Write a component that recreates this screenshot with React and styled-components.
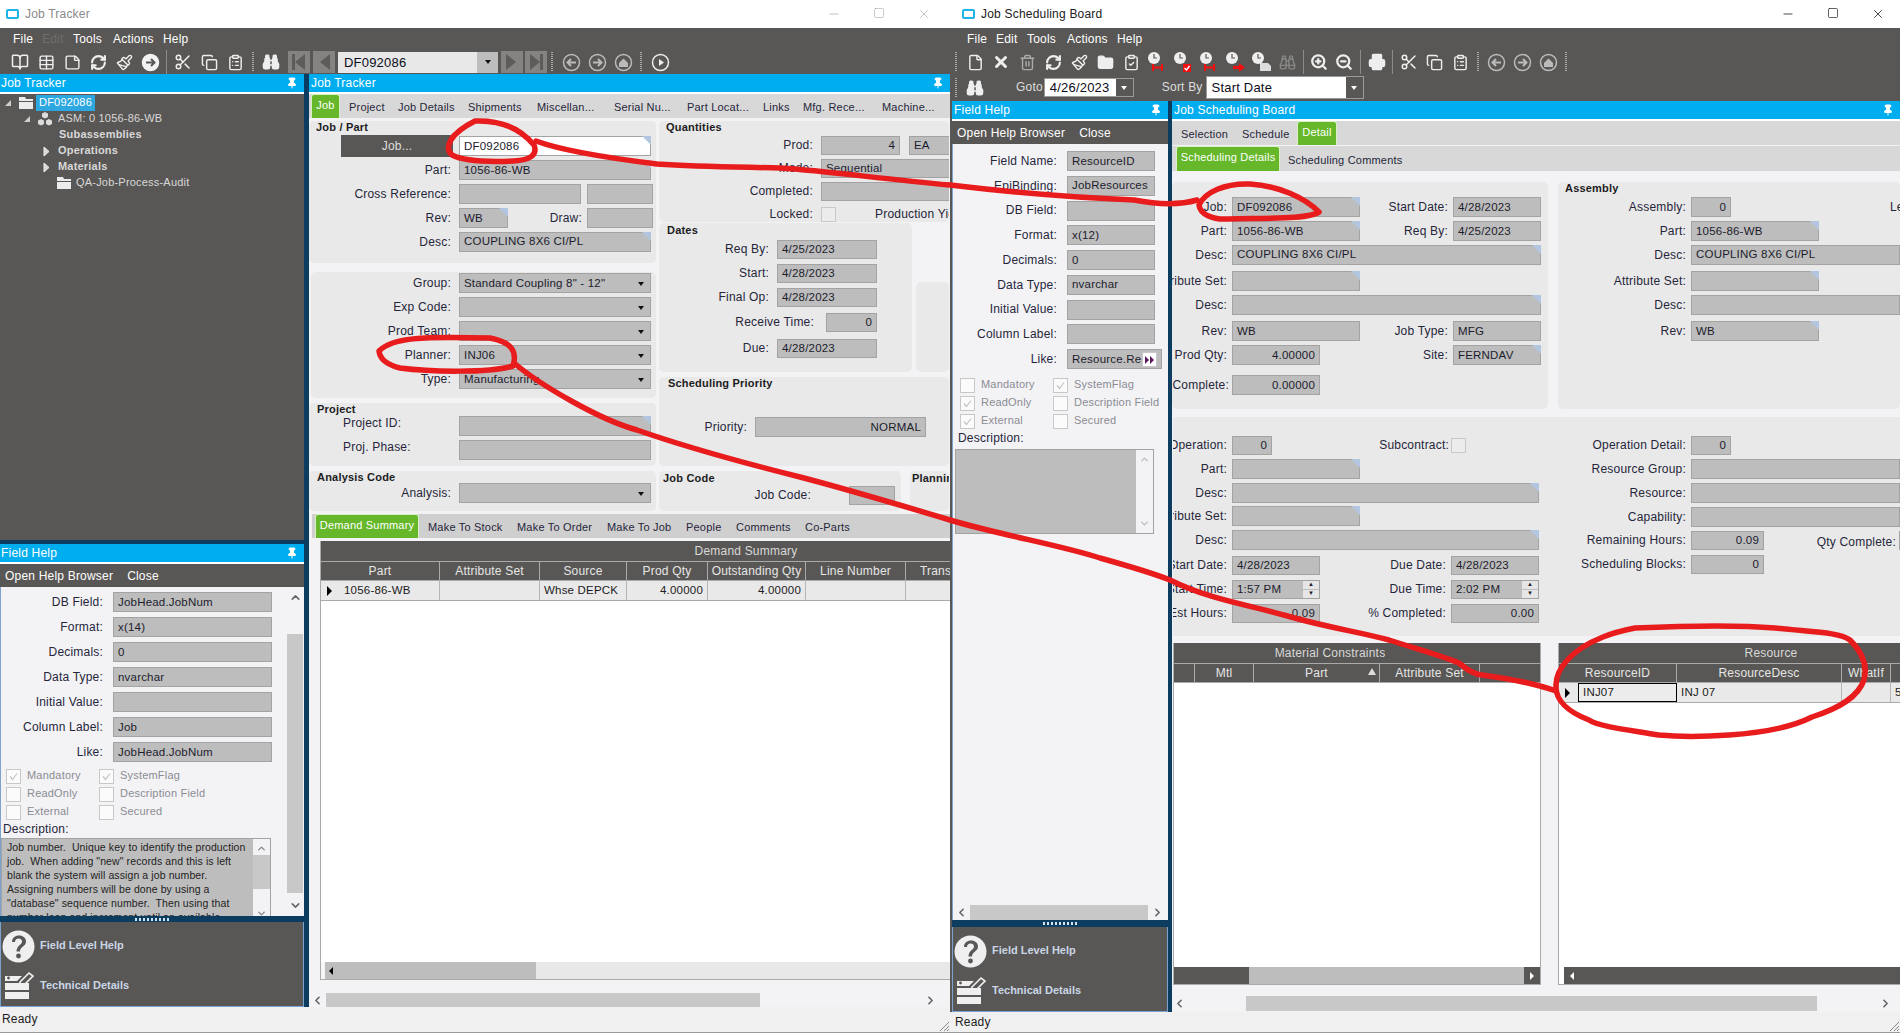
import React from 'react';
import styled, { createGlobalStyle } from 'styled-components';
import {
  BookOpen, Table, StickyNote, RefreshCw, Paintbrush, Scissors, Copy, ClipboardList, Binoculars,
  Minus, Square, X, Pin, ChevronUp, ChevronDown, ChevronLeft, ChevronRight, ZoomIn, ZoomOut, Printer,
  FolderClosed, ClipboardCheck, Trash2, File,
} from 'lucide-react';

const dark = '#595755';
const blue = '#00adef';
const navy = '#0d3c61';
const green = '#66b82a';

const GlobalStyle = createGlobalStyle`
  html, body { margin: 0; padding: 0; background: #fff; overflow: hidden; }
  body { font: 12px/1.2 "Liberation Sans", Arial, sans-serif; letter-spacing: 0.2px; color: #1c1c22; }
`;

const Screen = styled.div`
  position: relative;
  display: flex;
  width: 1900px;
  height: 1033px;
  overflow: hidden;
`;
const Window = styled.div`
  display: flex;
  flex-direction: column;
  width: 950px;
  height: 1033px;
  overflow: hidden;
  background: ${dark};
`;
const TitleBar = styled.div`
  display: flex;
  align-items: center;
  flex: 0 0 28px;
  padding-left: ${(p) => p.$left}px;
  background: #fff;
  color: ${(p) => (p.$active ? '#222' : '#8a8a8a')};
`;
const AppIcon = styled.span`
  width: 9px;
  height: 6px;
  margin-right: 6px;
  border: 2px solid #1fb3e8;
  border-radius: 2px;
`;
const WinButtons = styled.div`
  display: flex;
  margin-left: auto;
  padding-right: ${(p) => p.$pr}px;
  gap: 32px;
  color: ${(p) => (p.$active ? '#111' : '#999')};
`;
const MenuBar = styled.div`
  display: flex;
  align-items: center;
  flex: 0 0 22px;
  padding-left: ${(p) => p.$left}px;
  color: #fff;
`;
const MenuItem = styled.span`
  width: ${(p) => p.$w}px;
  color: ${(p) => (p.$off ? '#6f6d6b' : '#fff')};
`;
const ToolBar = styled.div`
  display: flex;
  align-items: center;
  flex: 0 0 ${(p) => p.$h || 24}px;
  padding-left: ${(p) => p.$left}px;
  color: #eee;
`;
const ToolBtn = styled.span`
  display: flex;
  align-items: center;
  justify-content: center;
  flex: 0 0 ${(p) => p.$w || 26}px;
  height: 24px;
  margin-left: ${(p) => p.$ml || 0}px;
`;
const Sep = styled.span`
  flex: 0 0 1px;
  height: 24px;
  margin: 0 3px;
  background: #8d8b89;
`;
const Grip = styled.span`
  flex: 0 0 2px;
  height: 20px;
  margin: 0 ${(p) => p.$mr ?? 4}px 0 ${(p) => p.$ml ?? 4}px;
  background: repeating-linear-gradient(#aaa 0 1px, transparent 1px 2px);
`;
const NavBtn = styled.span`
  display: flex;
  align-items: center;
  justify-content: center;
  flex: 0 0 22px;
  height: 22px;
  margin-left: ${(p) => p.$ml || 3}px;
  background: #858381;
  color: #5e5c5a;
`;
const NavCombo = styled.span`
  display: flex;
  flex: 0 0 160px;
  height: 21px;
  margin-left: 3px;
  background: #e8e8e8;
  color: #0c0c20;
  font-size: 13px;
`;
const NavComboText = styled.span`
  flex: 1;
  padding: 3px 6px;
`;
const NavComboArrow = styled.span`
  display: flex;
  align-items: center;
  justify-content: center;
  flex: 0 0 21px;
  background: #bdbdbd;
`;
const DownTri = styled.span`
  width: 0;
  height: 0;
  margin-left: auto;
  margin-right: ${(p) => p.$mr || 0}px;
  border: 3px solid transparent;
  border-top: 4px solid ${(p) => p.$c || '#111'};
  border-bottom: 0;
`;
const BarLabel = styled.span`
  margin-left: ${(p) => p.$ml}px;
  color: #ddd;
`;
const GotoBox = styled.span`
  display: flex;
  align-items: center;
  flex: 0 0 ${(p) => p.$w}px;
  height: ${(p) => p.$h}px;
  margin-left: ${(p) => p.$ml}px;
  padding-left: 5px;
  box-sizing: border-box;
  background: #fff;
  border: 1px solid #9a9a9a;
  color: #0c0c20;
  font-size: 13px;
`;
const GotoArrow = styled.span`
  display: flex;
  align-items: center;
  justify-content: center;
  align-self: stretch;
  flex: 0 0 17px;
  margin-left: auto;
  background: ${dark};
`;
const WhiteTri = styled(DownTri)`
  margin: 0;
`;
const Body = styled.div`
  display: flex;
  flex: 1;
  min-height: 0;
  ${(p) => p.$inset && 'padding-left: 2px;'}
`;
const StatusBar = styled.div`
  position: relative;
  display: flex;
  align-items: center;
  flex: 0 0 ${(p) => p.$h}px;
  box-sizing: border-box;
  padding-left: ${(p) => p.$left}px;
  background: #f0f0f0;
  border-bottom: 1px solid #999;
`;
const SizeGrip = styled.svg`
  position: absolute;
  right: 1px;
  bottom: 1px;
`;
const Dock = styled.div`
  display: flex;
  flex-direction: column;
  flex: 0 0 ${(p) => p.$w}px;
  min-width: 0;
`;
const Sash = styled.div`
  flex: 0 0 ${(p) => p.$w}px;
  background: ${navy};
`;
const DockHeader = styled.div`
  display: flex;
  align-items: center;
  justify-content: space-between;
  flex: 0 0 20px;
  box-sizing: border-box;
  padding: 0 6px 0 ${(p) => p.$left ?? 1}px;
  background: ${blue};
  color: #fff;
  border-bottom: 2px solid #fff;
`;
const Tree = styled.div`
  flex: 0 0 ${(p) => p.$h}px;
  box-sizing: border-box;
  padding-top: 1px;
  background: ${dark};
  color: #d8d8d8;
  font-size: 11px;
`;
const TreeRow = styled.div`
  display: flex;
  align-items: center;
  height: 16px;
  padding-left: ${(p) => p.$left}px;
  font-weight: ${(p) => (p.$bold ? 700 : 400)};
`;
const TreeCaret = styled.svg`
  flex: 0 0 9px;
  margin-right: ${(p) => p.$mr}px;
`;
const TreeSel = styled.span`
  margin-left: 2px;
  padding: 1px 3px;
  background: #2ca7e0;
  color: #fff;
`;
const TreeText = styled.span`
  margin-left: ${(p) => p.$ml || 4}px;
`;
const HSash = styled.div`
  display: flex;
  align-items: center;
  justify-content: center;
  flex: 0 0 ${(p) => p.$h}px;
  background: ${navy};
`;
const HSashDots = styled.span`
  width: 34px;
  height: 3px;
  background: repeating-linear-gradient(90deg, #cfe3f2 0 2px, transparent 2px 4px);
`;
const HelpBar = styled.div`
  display: flex;
  align-items: center;
  gap: 14px;
  flex: 0 0 23px;
  box-sizing: border-box;
  padding: 2px 0 0 5px;
  background: ${dark};
  color: #fff;
`;
const HelpPane = styled.div`
  display: flex;
  flex: 1;
  flex-direction: ${(p) => (p.$col ? 'column' : 'row')};
  min-height: 0;
  overflow: hidden;
  background: #f3f3f6;
  border-left: 1px solid #7aa3cf;
`;
const HelpBody = styled.div`
  flex: 1;
  min-width: 0;
  min-height: 0;
  padding-top: ${(p) => p.$top}px;
  overflow: hidden;
`;
const HelpRows = styled.div`
  display: flex;
  flex-direction: column;
  gap: ${(p) => p.$gap}px;
`;
const Row = styled.div`
  display: flex;
  align-items: ${(p) => p.$align || 'center'};
  flex: 0 0 ${(p) => p.$h || 20}px;
  height: ${(p) => p.$h || 20}px;
  margin-top: ${(p) => p.$mt || 0}px;
`;
const Label = styled.span`
  display: flex;
  justify-content: ${(p) => (p.$start ? 'flex-start' : 'flex-end')};
  flex: 0 0 ${(p) => p.$w}px;
  box-sizing: border-box;
  padding: 0 ${(p) => p.$pad ?? 8}px 0 ${(p) => p.$start || 0}px;
  margin-top: ${(p) => p.$mt || 0}px;
  overflow: hidden;
  white-space: nowrap;
  color: #26263a;
`;
const Box = styled.span`
  position: relative;
  display: flex;
  align-items: ${(p) => (p.$top ? 'flex-start' : 'center')};
  justify-content: ${(p) => (p.$right ? 'flex-end' : 'flex-start')};
  flex: 0 0 ${(p) => p.$w}px;
  box-sizing: border-box;
  height: ${(p) => p.$h || 20}px;
  padding: ${(p) => (p.$top ? '2px' : '1px')} 4px 0;
  background: ${(p) => (p.$white ? '#fff' : '#bdbdbd')};
  border: 1px solid #a3a3a3;
  color: #1c1c2c;
  font-size: 11.5px;
  white-space: nowrap;
  &::after {
    content: '';
    display: ${(p) => (p.$corner ? 'block' : 'none')};
    position: absolute;
    top: -1px;
    right: -1px;
    border-top: 9px solid #b3c6e0;
    border-left: 9px solid transparent;
  }
`;
const Spinner = styled.span`
  display: flex;
  flex-direction: column;
  gap: 1px;
  flex: 0 0 16px;
  height: 17px;
  margin: -1px -4px 0 auto;
`;
const SpinBtn = styled.span`
  display: flex;
  align-items: center;
  justify-content: center;
  flex: 1;
  background: #e6e6e6;
  font-size: 6px;
`;
const Check = styled.span`
  display: flex;
  align-items: center;
  justify-content: center;
  flex: 0 0 13px;
  height: 13px;
  margin-left: ${(p) => p.$ml || 0}px;
  background: ${(p) => p.$bg || '#fbfbfb'};
  border: 1px solid #c8c8c8;
`;
const CheckRows = styled.div`
  display: grid;
  grid-template-columns: ${(p) => p.$col}px 1fr;
  grid-auto-rows: 18px;
  margin: ${(p) => p.$mt}px 0 0 ${(p) => p.$left}px;
`;
const CheckItem = styled.span`
  display: flex;
  align-items: center;
  gap: 6px;
  color: #8b8b93;
  font-size: 11px;
  white-space: nowrap;
`;
const DescLabel = styled.div`
  margin: ${(p) => p.$mt}px 0 ${(p) => p.$mb ?? 2}px ${(p) => p.$left}px;
  color: #26263a;
`;
const DescBox = styled.div`
  display: flex;
  width: ${(p) => p.$w}px;
  height: ${(p) => p.$h}px;
  margin-left: ${(p) => p.$left}px;
  background: #bdbdbd;
  border: 1px solid #a3a3a3;
  overflow: hidden;
`;
const DescText = styled.div`
  flex: 1;
  padding: 1px 5px;
  font-size: 10.5px;
  letter-spacing: 0.1px;
  line-height: 14px;
  white-space: pre;
  overflow: hidden;
  color: #222;
`;
const DescScroll = styled.div`
  display: flex;
  flex-direction: column;
  align-items: center;
  justify-content: space-between;
  flex: 0 0 17px;
  padding: 4px 0;
  background: #f3f3f6;
  color: ${(p) => p.$c || '#888'};
`;
const DescThumb = styled.div`
  align-self: stretch;
  height: 34px;
  margin: 1px 0 auto;
  background: #c8c8c8;
`;
const VScroll = styled.div`
  display: flex;
  flex-direction: column;
  align-items: center;
  flex: 0 0 16px;
  margin-right: 1px;
  padding: 4px 0;
  color: #666;
`;
const VThumb = styled.div`
  align-self: stretch;
  flex: 1;
  margin: 30px 0 6px;
  background: #c8c8c8;
`;
const HScroll = styled.div`
  display: flex;
  align-items: center;
  flex: 0 0 15px;
  margin-top: ${(p) => p.$mt || 0}px;
  color: #666;
`;
const HThumb = styled.div`
  flex: 0 0 ${(p) => p.$w}px;
  align-self: stretch;
  margin-left: ${(p) => p.$ml}px;
  background: #c8c8c8;
`;
const ArrowSlot = styled.span`
  display: flex;
  justify-content: center;
  flex: 0 0 ${(p) => p.$w}px;
  margin-left: ${(p) => p.$ml || 0}px;
`;
const HelpFooter = styled.div`
  flex: 0 0 ${(p) => p.$h}px;
  box-sizing: border-box;
  padding-top: 4px;
  background: ${dark};
  border: 1px solid #7aa3cf;
  border-top: 0;
  color: #c9d6e6;
  font-weight: 700;
  font-size: 11px;
  letter-spacing: 0;
`;
const FooterRow = styled.div`
  display: flex;
  align-items: center;
  gap: 5px;
  height: 40px;
  padding-left: 1px;
`;
const FooterIcon = styled.svg`
  flex: 0 0 33px;
`;
const Main = styled.div`
  display: flex;
  flex-direction: column;
  flex: 1;
  min-width: 0;
  background: #f3f3f6;
  overflow: hidden;
`;
const TabStrip = styled.div`
  display: flex;
  align-items: flex-end;
  flex: 0 0 ${(p) => p.$h || 24}px;
  margin: ${(p) => p.$mt || 0}px 0 0 ${(p) => p.$ml || 0}px;
  padding-left: ${(p) => p.$pad || 0}px;
  background: ${(p) => p.$bg || '#d8d8d8'};
  font-size: 11px;
  overflow: hidden;
`;
const Tab = styled.span`
  display: flex;
  align-items: center;
  flex: 0 0 ${(p) => p.$w}px;
  height: 100%;
  box-sizing: border-box;
  white-space: nowrap;
  margin-left: ${(p) => p.$ml || 0}px;
  ${(p) =>
    p.$on
      ? `
    justify-content: center;
    padding-bottom: 2px;
    background: ${green};
    color: #fff;
    border: 1px solid #d9f0c4;
    border-bottom: 0;
    border-radius: 3px 3px 0 0;
  `
      : `
    padding-top: 4px;
    color: #26263a;
  `}
`;
const FormGrid = styled.div`
  display: flex;
  flex: 0 0 ${(p) => p.$h}px;
  box-sizing: border-box;
  gap: 3px;
  padding-top: 3px;
  overflow: hidden;
`;
const FormCol = styled.div`
  display: flex;
  flex-direction: column;
  flex: 0 0 ${(p) => p.$w}px;
  min-width: 0;
`;
const Group = styled.section`
  ${(p) => p.$flex && 'display: flex;'}
  flex: ${(p) => (p.$grow ? 1 : `0 0 ${p.$basis ?? p.$h}px`)};
  box-sizing: border-box;
  height: ${(p) => p.$h}px;
  margin: ${(p) => p.$mt || 0}px 0 0 ${(p) => p.$ml || 0}px;
  padding-top: ${(p) => p.$top || 0}px;
  background: #e9e9e9;
  border-radius: ${(p) => (p.$square ? 0 : 5)}px;
  overflow: hidden;
  min-width: 0;
`;
const GroupRow = styled.div`
  display: flex;
  flex: 0 0 ${(p) => p.$h}px;
  gap: ${(p) => p.$gap}px;
  margin-top: ${(p) => p.$mt || 0}px;
  min-width: 0;
`;
const Heading = styled.div`
  height: ${(p) => p.$h}px;
  padding: ${(p) => p.$top ?? 1}px 0 0 ${(p) => p.$left}px;
  box-sizing: border-box;
  font-size: 11px;
  font-weight: 700;
  white-space: nowrap;
  color: #1c1c22;
`;
const Stack = styled.div`
  display: flex;
  flex-direction: column;
  gap: 4px;
  padding-top: ${(p) => p.$top || 0}px;
`;
const JobButton = styled.span`
  display: flex;
  align-items: center;
  justify-content: center;
  flex: 0 0 112px;
  height: 22px;
  margin: 0 6px 0 32px;
  background: ${dark};
  color: #ddd;
`;
const DataGrid = styled.div`
  display: flex;
  flex-direction: column;
  flex: ${(p) => (p.$w ? `0 0 ${p.$w}px` : 1)};
  box-sizing: border-box;
  min-width: 0;
  margin-left: ${(p) => p.$ml || 0}px;
  background: #fff;
  border: solid #aaa;
  border-width: 0 ${(p) => (p.$noRight ? 0 : 1)}px 1px 1px;
  overflow: hidden;
`;
const GridTitle = styled.div`
  flex: 0 0 20px;
  display: flex;
  background: ${dark};
  color: #d8d8d8;
`;
const GridTitleText = styled.span`
  display: flex;
  align-items: center;
  justify-content: center;
  flex: 0 0 ${(p) => p.$w}px;
`;
const GridHead = styled.div`
  display: flex;
  flex: 0 0 20px;
  background: ${dark};
  border-top: 1px solid #aaa;
  border-bottom: 1px solid #aaa;
  box-sizing: border-box;
  color: #e6e6e6;
`;
const HeadCell = styled.span`
  position: relative;
  display: flex;
  align-items: center;
  justify-content: center;
  flex: 0 0 ${(p) => p.$w}px;
  box-sizing: border-box;
  border-right: 1px solid #aaa;
  white-space: nowrap;
`;
const SortMark = styled.span`
  position: absolute;
  right: 3px;
  top: 4px;
  width: 0;
  height: 0;
  border: 4px solid transparent;
  border-bottom: 7px solid #ddd;
  border-top: 0;
`;
const GridRow = styled.div`
  display: flex;
  flex: 0 0 20px;
  box-sizing: border-box;
  background: #e9e9e9;
  border-bottom: 1px solid #aaa;
`;
const Cell = styled.span`
  display: flex;
  align-items: center;
  justify-content: ${(p) => (p.$right ? 'flex-end' : 'flex-start')};
  flex: 0 0 ${(p) => p.$w}px;
  box-sizing: border-box;
  padding: 0 4px;
  font-size: 11.5px;
  white-space: nowrap;
  border-right: 1px solid #b5b5b5;
  ${(p) => p.$sel && 'border: 1px solid #000; background: #ececec;'}
  ${(p) => p.$mark && 'border-right: 0;'}
`;
const RowMark = styled.span`
  width: 0;
  height: 0;
  border: 5px solid transparent;
  border-left: 5px solid #000;
  border-right: 0;
  margin-left: 2px;
`;
const GridFill = styled.div`
  flex: 1;
  background: #fff;
`;
const GridScroll = styled.div`
  display: flex;
  flex: 0 0 17px;
  background: ${(p) => p.$bg};
`;
const GridScrollPart = styled.span`
  display: flex;
  align-items: center;
  justify-content: ${(p) => p.$justify || 'center'};
  flex: ${(p) => (p.$w ? `0 0 ${p.$w}px` : 1)};
  padding-left: ${(p) => p.$pl || 0}px;
  background: ${(p) => p.$bg};
`;
const ScrollTri = styled.span`
  width: 0;
  height: 0;
  border: 4px solid transparent;
  ${(p) => (p.$left ? `border-right: 4px solid ${p.$c}; border-left: 0;` : `border-left: 4px solid ${p.$c}; border-right: 0;`)}
`;
const Section = styled.div`
  display: flex;
  flex: 0 0 ${(p) => p.$h}px;
  gap: ${(p) => p.$gap || 0}px;
  margin-top: ${(p) => p.$mt || 0}px;
  padding: 0 ${(p) => p.$pr || 0}px 0 ${(p) => p.$pl || 0}px;
  min-height: 0;
  overflow: hidden;
`;
const Overlay = styled.svg`
  position: absolute;
  inset: 0;
  pointer-events: none;
`;

const Ticks = () => (
  <svg width="9" height="9" viewBox="0 0 9 9" fill="none" stroke="#c4c4c4" strokeWidth="1.2">
    <path d="M1 4.5l2.5 3L8 1.5" />
  </svg>
);

const Folder = () => (
  <svg width="16" height="14" viewBox="0 0 16 14">
    <path d="M1 1h6l1 2h7v2H1z M1 6h14v7H1z" fill="#ececec" />
  </svg>
);

const Cubes = () => (
  <svg width="16" height="15" viewBox="0 0 16 15" fill="#dcdcdc">
    <path d="M8 0l3 1.5V5L8 6.5 5 5V1.5zM4 7l3 1.5V12l-3 1.5L1 12V8.5zM12 7l3 1.5V12l-3 1.5L9 12V8.5z" />
  </svg>
);

const ExpandedCaret = ({ mr }) => (
  <TreeCaret $mr={mr} width="9" height="9" viewBox="0 0 9 9">
    <path d="M7 1v6H1z" fill="#cfcfcf" />
  </TreeCaret>
);
const ClosedCaret = ({ mr }) => (
  <TreeCaret $mr={mr} width="9" height="11" viewBox="0 0 9 11">
    <path d="M2 1l5 4.5L2 10z" fill="#d8d8d8" stroke="#eee" />
  </TreeCaret>
);

const CircleGo = ({ dir = 'right', solid, color = '#ddd' }) => (
  <svg width="19" height="19" viewBox="0 0 19 19" fill="none" stroke={color} strokeWidth="1.5">
    <circle cx="9.5" cy="9.5" r="8" fill={solid ? color : 'none'} />
    {dir === 'left' && <path d="M14 9.5H6M9 6L5.5 9.5 9 13" strokeWidth="2" />}
    {dir === 'right' && <path d="M5 9.5h8M10 6l3.5 3.5L10 13" strokeWidth="2" stroke={solid ? dark : color} />}
    {dir === 'home' && <path d="M5 10l4.5-4.5L14 10v4H5z" fill={color} stroke="none" />}
    {dir === 'play' && <path d="M8 6l5 3.5L8 13z" fill={color} stroke="none" />}
  </svg>
);

const ClockFlag = ({ kind }) => (
  <svg width="24" height="24" viewBox="0 0 24 24">
    <circle cx="9" cy="8" r="6" fill="#eee" />
    <path d="M9 4v4h3" fill="none" stroke={dark} strokeWidth="1.2" />
    {kind === 'bar' && <path d="M7 14v7h2v-2.5h7V21h2v-7h-2v2.5H9V14z" fill="#f01010" />}
    {kind === 'check' && (
      <g>
        <rect x="12" y="14" width="8" height="8" fill="#f01010" />
        <path d="M13.5 18l2 2 3-4" stroke="#fff" strokeWidth="1.4" fill="none" />
      </g>
    )}
    {kind === 'arrow' && <path d="M10 16h6v-3l6 4.500-6 4.500v-3h-6z" fill="#f01010" />}
    {kind === 'doc' && <path d="M11 13h8l3 3v5H11z" fill="#ddd" />}
  </svg>
);

const NavTri = ({ back, stop }) => (
  <svg width="14" height="18" viewBox="0 0 14 18" fill="currentColor">
    {back ? <path d="M13 1v16L3 9z" /> : <path d="M1 1v16l10-8z" />}
    {stop && (back ? <rect x="0" y="1" width="3" height="16" /> : <rect x="11" y="1" width="3" height="16" />)}
  </svg>
);

const Question = () => (
  <FooterIcon width="33" height="33" viewBox="0 0 33 33">
    <circle cx="16.500" cy="16.500" r="16" fill="#efefef" />
    <path d="M10 12c0-4 3-6.500 7-6.500s7 2.500 7 6c0 5-6 5-6 10h-3.500c0-6 5.500-6.500 5.500-10 0-1.800-1.500-3-3.500-3s-3.500 1.500-3.500 3.500z" fill={dark} />
    <circle cx="16.500" cy="26" r="2.400" fill={dark} />
  </FooterIcon>
);

const TechIcon = () => (
  <FooterIcon width="33" height="30" viewBox="0 0 33 30" fill="#efefef">
    <path d="M3 5h17l-5 5H3zM3 12h24v7H3zM3 21h24v7H3z" />
    <circle cx="6.500" cy="7" r="1.400" fill={dark} />
    <path d="M18 11l9-9 4 3-9 9-5 1z" fill="none" stroke="#efefef" strokeWidth="1.600" />
  </FooterIcon>
);

const Field = ({ l, lw, pad, lmt, start, w, v, right, corner, combo, white, top, spin, h }) => (
  <>
    {l !== undefined && (
      <Label $w={lw} $pad={pad} $mt={lmt} $start={start}>
        {l}
      </Label>
    )}
    {w !== undefined && (
      <Box $w={w} $right={right} $corner={corner} $white={white} $top={top} $h={h}>
        {v}
        {combo && <DownTri $mr={2} />}
        {spin && (
          <Spinner>
            <SpinBtn>▲</SpinBtn>
            <SpinBtn>▼</SpinBtn>
          </Spinner>
        )}
      </Box>
    )}
  </>
);

const Cb = ({ on, bg, ml }) => (
  <Check $bg={bg} $ml={ml}>
    {on && <Ticks />}
  </Check>
);

const CheckGrid = ({ col, left, mt, items }) => (
  <CheckRows $col={col} $left={left} $mt={mt}>
    {items.map(([text, on]) => (
      <CheckItem key={text}>
        <Cb on={on} />
        {text}
      </CheckItem>
    ))}
  </CheckRows>
);

const HelpRowList = ({ rows, lw, w, gap }) => (
  <HelpRows $gap={gap}>
    {rows.map(([l, v]) => (
      <Row key={l}>
        <Field l={l} lw={lw} pad={10} w={w} v={v} />
      </Row>
    ))}
  </HelpRows>
);

const Footer = ({ h }) => (
  <HelpFooter $h={h}>
    <FooterRow>
      <Question />
      Field Level Help
    </FooterRow>
    <FooterRow>
      <TechIcon />
      Technical Details
    </FooterRow>
  </HelpFooter>
);

// merge: the row marker column has no heading of its own, the first heading spans it
const GridTable = ({ title, titleW, cols, row, ml, w, noRight, merge, scroll }) => {
  const heads = merge ? [{ ...cols[1], w: cols[0].w + cols[1].w }, ...cols.slice(2)] : cols;
  return (
    <DataGrid $ml={ml} $w={w} $noRight={noRight}>
      <GridTitle>
        <GridTitleText $w={titleW}>{title}</GridTitleText>
      </GridTitle>
      <GridHead>
        {heads.map((c, i) => (
          <HeadCell key={i} $w={c.w}>
            {c.t}
            {c.sort && <SortMark />}
          </HeadCell>
        ))}
      </GridHead>
      {row && (
        <GridRow>
          {cols.map((c, i) =>
            i === 0 ? (
              <Cell key={i} $w={c.w} $mark>
                <RowMark />
              </Cell>
            ) : (
              <Cell key={i} $w={c.w} $right={c.right} $sel={c.sel}>
                {row[i]}
              </Cell>
            )
          )}
        </GridRow>
      )}
      <GridFill />
      {scroll}
    </DataGrid>
  );
};

const jobHelp = [
  ['DB Field:', 'JobHead.JobNum'],
  ['Format:', 'x(14)'],
  ['Decimals:', '0'],
  ['Data Type:', 'nvarchar'],
  ['Initial Value:', ''],
  ['Column Label:', 'Job'],
  ['Like:', 'JobHead.JobNum'],
];
const resourceHelp = [
  ['Field Name:', 'ResourceID'],
  ['EpiBinding:', 'JobResources'],
  ['DB Field:', ''],
  ['Format:', 'x(12)'],
  ['Decimals:', '0'],
  ['Data Type:', 'nvarchar'],
  ['Initial Value:', ''],
  ['Column Label:', ''],
];
const jobChecks = [
  ['Mandatory', true], ['SystemFlag', true],
  ['ReadOnly', false], ['Description Field', false],
  ['External', false], ['Secured', false],
];
const resourceChecks = [
  ['Mandatory', false], ['SystemFlag', true],
  ['ReadOnly', true], ['Description Field', false],
  ['External', true], ['Secured', false],
];
const jobHelpText = `Job number.  Unique key to identify the production
job.  When adding "new" records and this is left
blank the system will assign a job number.
Assigning numbers will be done by using a
"database" sequence number.  Then using that
number loop and increment until an available`;

const jobTabs = [
  ['Project', 49], ['Job Details', 70], ['Shipments', 69], ['Miscellan...', 77], ['Serial Nu...', 73],
  ['Part Locat...', 76], ['Links', 40], ['Mfg. Rece...', 79], ['Machine...', 80],
];
const demandTabs = [
  ['Make To Stock', 89], ['Make To Order', 90], ['Make To Job', 79], ['People', 50], ['Comments', 69], ['Co-Parts', 60],
];
const demandCols = [
  { t: '', w: 19 }, { t: 'Part', w: 100 }, { t: 'Attribute Set', w: 100 }, { t: 'Source', w: 87 },
  { t: 'Prod Qty', w: 81, right: true }, { t: 'Outstanding Qty', w: 98, right: true },
  { t: 'Line Number', w: 100 }, { t: 'Trans', w: 60 },
];
const materialCols = [
  { t: '', w: 21 }, { t: 'Mtl', w: 59 }, { t: 'Part', w: 126, sort: true }, { t: 'Attribute Set', w: 100 }, { t: '', w: 61 },
];
const resourceCols = [
  { t: '', w: 19 }, { t: 'ResourceID', w: 99, sel: true }, { t: 'ResourceDesc', w: 165 }, { t: 'WhatIf', w: 49 }, { t: '', w: 30 },
];

function JobTrackerForm() {
  return (
    <FormGrid $h={396}>
      <FormCol $w={347}>
        <Group $h={142}>
          <Heading $h={15} $left={7} $top={0}>Job / Part</Heading>
          <Stack>
            <Row>
              <JobButton>Job...</JobButton>
              <Field w={192} v="DF092086" white corner />
            </Row>
            <Row><Field l="Part:" lw={150} w={192} v="1056-86-WB" corner /></Row>
            <Row>
              <Field l="Cross Reference:" lw={150} w={122} />
              <Field l="" lw={6} pad={0} w={66} />
            </Row>
            <Row>
              <Field l="Rev:" lw={150} w={49} v="WB" corner />
              <Field l="Draw:" lw={79} pad={5} w={66} />
            </Row>
            <Row><Field l="Desc:" lw={150} w={192} v="COUPLING 8X6 CI/PL" corner top /></Row>
          </Stack>
        </Group>
        <Group $h={126} $mt={9} $ml={2} $top={1}>
          <Stack>
            <Row><Field l="Group:" lw={148} w={192} v={'Standard Coupling 8" - 12"'} combo /></Row>
            <Row><Field l="Exp Code:" lw={148} w={192} combo /></Row>
            <Row><Field l="Prod Team:" lw={148} w={192} combo /></Row>
            <Row><Field l="Planner:" lw={148} w={192} v="INJ06" combo /></Row>
            <Row><Field l="Type:" lw={148} w={192} v="Manufacturing" combo /></Row>
          </Stack>
        </Group>
        <Group $h={63} $mt={5}>
          <Heading $h={13} $left={8} $top={0}>Project</Heading>
          <Stack>
            <Row $align="flex-start"><Field l="Project ID:" lw={150} start={34} w={192} corner /></Row>
            <Row $align="flex-start"><Field l="Proj. Phase:" lw={150} start={34} w={192} /></Row>
          </Stack>
        </Group>
        <Group $h={40} $mt={5}>
          <Heading $h={12} $left={8} $top={0}>Analysis Code</Heading>
          <Row><Field l="Analysis:" lw={150} w={192} combo /></Row>
        </Group>
      </FormCol>
      <FormCol $w={290}>
        <Group $h={101}>
          <Heading $h={15} $left={7} $top={0}>Quantities</Heading>
          <Stack>
            <Row $h={19}>
              <Field l="Prod:" lw={162} w={79} v="4" right h={19} />
              <Field l="" lw={9} pad={0} w={50} v="EA" h={19} />
            </Row>
            <Row $h={19}><Field l="Mode:" lw={162} w={140} v="Sequential" h={19} /></Row>
            <Row $h={19}><Field l="Completed:" lw={162} w={140} h={19} /></Row>
            <Row $h={19}>
              <Field l="Locked:" lw={162} />
              <Cb bg="#ececec" />
              <Label $w={115} $pad={0} $start={39}>Production Yield</Label>
            </Row>
          </Stack>
        </Group>
        <GroupRow $h={149} $gap={4} $mt={1}>
          <Group $h={149} $basis={253}>
            <Heading $h={17} $left={8} $top={1}>Dates</Heading>
            <Stack>
              <Row $h={19}><Field l="Req By:" lw={118} w={100} v="4/25/2023" h={19} /></Row>
              <Row $h={19} $mt={1}><Field l="Start:" lw={118} w={100} v="4/28/2023" h={19} /></Row>
              <Row $h={19} $mt={1}><Field l="Final Op:" lw={118} w={100} v="4/28/2023" h={19} /></Row>
              <Row $h={19} $mt={2}><Field l="Receive Time:" lw={167} pad={12} w={51} v="0" right h={19} /></Row>
              <Row $h={19} $mt={3}><Field l="Due:" lw={118} w={100} v="4/28/2023" h={19} /></Row>
            </Stack>
          </Group>
          <Group $h={90} $basis={33} $mt={59} />
        </GroupRow>
        <Group $h={89} $mt={5}>
          <Heading $h={14} $left={9} $top={0}>Scheduling Priority</Heading>
          <Row $mt={26}><Field l="Priority:" lw={96} w={171} v="NORMAL" right /></Row>
        </Group>
        <GroupRow $h={40} $gap={9} $mt={5}>
          <Group $h={40} $basis={242}>
            <Heading $h={15} $left={4} $top={1}>Job Code</Heading>
            <Row $h={19}><Field l="Job Code:" lw={190} pad={38} w={46} h={19} /></Row>
          </Group>
          <Group $h={40} $grow>
            <Heading $h={15} $left={2} $top={1}>Planning</Heading>
          </Group>
        </GroupRow>
      </FormCol>
    </FormGrid>
  );
}

function SchedulingForm() {
  return (
    <>
      <Section $h={227} $gap={10} $mt={11}>
        <Group $h={227} $basis={376}>
          <Stack $top={15}>
            <Row>
              <Field l="Job:" lw={60} pad={5} w={128} v="DF092086" corner />
              <Field l="Start Date:" lw={93} pad={5} w={88} v="4/28/2023" />
            </Row>
            <Row>
              <Field l="Part:" lw={60} pad={5} w={128} v="1056-86-WB" corner />
              <Field l="Req By:" lw={93} pad={5} w={88} v="4/25/2023" />
            </Row>
            <Row><Field l="Desc:" lw={60} pad={5} w={309} v="COUPLING 8X6 CI/PL" corner top /></Row>
            <Row $mt={2}><Field l="Attribute Set:" lw={60} pad={5} w={128} corner /></Row>
            <Row><Field l="Desc:" lw={60} pad={5} w={309} corner /></Row>
            <Row $mt={2}>
              <Field l="Rev:" lw={60} pad={5} w={128} v="WB" />
              <Field l="Job Type:" lw={93} pad={5} w={88} v="MFG" />
            </Row>
            <Row>
              <Field l="Prod Qty:" lw={60} pad={5} w={88} v="4.00000" right />
              <Field l="Site:" lw={133} pad={5} w={88} v="FERNDAV" corner />
            </Row>
            <Row $mt={6}><Field l="% Complete:" lw={60} pad={3} w={88} v="0.00000" right /></Row>
          </Stack>
        </Group>
        <Group $h={227} $grow>
          <Heading $h={15} $left={7} $top={0}>Assembly</Heading>
          <Stack>
            <Row>
              <Field l="Assembly:" lw={133} pad={5} w={40} v="0" right />
              <Label $w={169} $pad={0} $start={159}>Level:</Label>
            </Row>
            <Row><Field l="Part:" lw={133} pad={5} w={128} v="1056-86-WB" corner /></Row>
            <Row><Field l="Desc:" lw={133} pad={5} w={209} v="COUPLING 8X6 CI/PL" top /></Row>
            <Row $mt={2}><Field l="Attribute Set:" lw={133} pad={5} w={128} corner /></Row>
            <Row><Field l="Desc:" lw={133} pad={5} w={209} /></Row>
            <Row $mt={2}><Field l="Rev:" lw={133} pad={5} w={128} v="WB" corner /></Row>
          </Stack>
        </Group>
      </Section>
      <Section $h={219} $mt={8} $pl={1}>
        <Group $h={219} $grow $top={19} $flex $square>
          <FormCol $w={385}>
            <Stack>
              <Row $h={19}>
                <Field l="Operation:" lw={59} pad={5} w={40} v="0" right h={19} />
                <Field l="Subcontract:" lw={179} pad={2} />
                <Cb bg="#ececec" />
              </Row>
              <Row><Field l="Part:" lw={59} pad={5} w={128} corner /></Row>
              <Row><Field l="Desc:" lw={59} pad={5} w={307} corner /></Row>
              <Row $mt={-1}><Field l="Attribute Set:" lw={59} pad={5} w={128} corner /></Row>
              <Row><Field l="Desc:" lw={59} pad={5} w={307} corner /></Row>
              <Row $h={19} $mt={2}>
                <Field l="Start Date:" lw={59} pad={5} w={88} v="4/28/2023" h={19} />
                <Field l="Due Date:" lw={131} pad={5} w={88} v="4/28/2023" h={19} />
              </Row>
              <Row $h={19} $mt={1}>
                <Field l="Start Time:" lw={59} pad={5} w={88} v="1:57 PM" spin h={19} />
                <Field l="Due Time:" lw={131} pad={5} w={88} v="2:02 PM" spin h={19} />
              </Row>
              <Row $h={19} $mt={1}>
                <Field l="Est Hours:" lw={59} pad={5} w={88} v="0.09" right h={19} />
                <Field l="% Completed:" lw={131} pad={5} w={88} v="0.00" right h={19} />
              </Row>
            </Stack>
          </FormCol>
          <FormCol $w={342}>
            <Stack>
              <Row $h={19}><Field l="Operation Detail:" lw={133} pad={5} w={40} v="0" right h={19} /></Row>
              <Row><Field l="Resource Group:" lw={133} pad={5} w={209} /></Row>
              <Row><Field l="Resource:" lw={133} pad={5} w={209} /></Row>
              <Row><Field l="Capability:" lw={133} pad={5} w={209} /></Row>
              <Row $h={19}>
                <Field l="Remaining Hours:" lw={133} pad={5} w={73} v="0.09" right h={19} />
                <Field l="Qty Complete:" lw={135} pad={3} lmt={4} w={40} h={19} />
              </Row>
              <Row $h={19} $mt={1}><Field l="Scheduling Blocks:" lw={133} pad={5} w={73} v="0" right h={19} /></Row>
            </Stack>
          </FormCol>
        </Group>
      </Section>
    </>
  );
}

export default function App() {
  return (
    <Screen>
      <GlobalStyle />

      <Window>
        <TitleBar $left={6}>
          <AppIcon />
          Job Tracker
          <WinButtons $pr={19}>
            <Minus size={14} strokeWidth={1} />
            <Square size={12} strokeWidth={1} />
            <X size={14} strokeWidth={1} />
          </WinButtons>
        </TitleBar>
        <MenuBar $left={13}>
          <MenuItem $w={29}>File</MenuItem>
          <MenuItem $w={31} $off>Edit</MenuItem>
          <MenuItem $w={40}>Tools</MenuItem>
          <MenuItem $w={50}>Actions</MenuItem>
          <MenuItem $w={30}>Help</MenuItem>
        </MenuBar>
        <ToolBar $left={7}>
          <ToolBtn><BookOpen size={18} /></ToolBtn>
          <ToolBtn><Table size={17} /></ToolBtn>
          <ToolBtn><StickyNote size={17} /></ToolBtn>
          <ToolBtn><RefreshCw size={17} strokeWidth={3} /></ToolBtn>
          <ToolBtn><Paintbrush size={17} /></ToolBtn>
          <ToolBtn><CircleGo solid color="#f2f2f2" /></ToolBtn>
          <Sep />
          <ToolBtn><Scissors size={18} /></ToolBtn>
          <ToolBtn><Copy size={17} /></ToolBtn>
          <ToolBtn><ClipboardList size={17} /></ToolBtn>
          <Grip />
          <ToolBtn><Binoculars size={18} fill="#eee" /></ToolBtn>
          <NavBtn $ml={4}><NavTri back stop /></NavBtn>
          <NavBtn><NavTri back /></NavBtn>
          <NavCombo>
            <NavComboText>DF092086</NavComboText>
            <NavComboArrow><WhiteTri /></NavComboArrow>
          </NavCombo>
          <NavBtn><NavTri /></NavBtn>
          <NavBtn $ml={2}><NavTri stop /></NavBtn>
          <Grip />
          <ToolBtn $ml={1}><CircleGo dir="left" color="#bbb" /></ToolBtn>
          <ToolBtn><CircleGo color="#bbb" /></ToolBtn>
          <ToolBtn><CircleGo dir="home" color="#bbb" /></ToolBtn>
          <Grip />
          <ToolBtn $ml={1}><CircleGo dir="play" color="#eee" /></ToolBtn>
        </ToolBar>
        <Body>
          <Dock $w={304}>
            <DockHeader>Job Tracker <Pin size={12} fill="#fff" /></DockHeader>
            <Tree $h={446}>
              <TreeRow $left={4}>
                <ExpandedCaret mr={5} />
                <Folder />
                <TreeSel>DF092086</TreeSel>
              </TreeRow>
              <TreeRow $left={23}>
                <ExpandedCaret mr={5} />
                <Cubes />
                <TreeText $ml={5}>ASM: 0 1056-86-WB</TreeText>
              </TreeRow>
              <TreeRow $left={59} $bold>Subassemblies</TreeRow>
              <TreeRow $left={42} $bold>
                <ClosedCaret mr={7} />
                Operations
              </TreeRow>
              <TreeRow $left={42} $bold>
                <ClosedCaret mr={7} />
                Materials
              </TreeRow>
              <TreeRow $left={56}>
                <Folder />
                <TreeText>QA-Job-Process-Audit</TreeText>
              </TreeRow>
            </Tree>
            <HSash $h={4} />
            <DockHeader>Field Help <Pin size={12} fill="#fff" /></DockHeader>
            <HelpBar>
              <span>Open Help Browser</span>
              <span>Close</span>
            </HelpBar>
            <HelpPane>
              <HelpBody $top={5}>
                <HelpRowList rows={jobHelp} lw={112} w={159} gap={5} />
                <CheckGrid col={93} left={5} mt={5} items={jobChecks} />
                <DescLabel $left={2} $mt={1}>Description:</DescLabel>
                <DescBox $w={268} $h={84} $left={0}>
                  <DescText>{jobHelpText}</DescText>
                  <DescScroll>
                    <ChevronUp size={11} strokeWidth={3} />
                    <DescThumb />
                    <ChevronDown size={11} strokeWidth={3} />
                  </DescScroll>
                </DescBox>
              </HelpBody>
              <VScroll>
                <ChevronUp size={13} strokeWidth={3} />
                <VThumb />
                <ChevronDown size={13} strokeWidth={3} />
              </VScroll>
            </HelpPane>
            <HSash $h={6}><HSashDots /></HSash>
            <Footer h={81} />
          </Dock>
          <Sash $w={5} />
          <Main>
            <DockHeader $left={2}>Job Tracker <Pin size={12} fill="#fff" /></DockHeader>
            <TabStrip $pad={2}>
              <Tab $on $w={29}>Job</Tab>
              {jobTabs.map(([t, w], i) => (
                <Tab key={t} $w={w} $ml={i === 0 ? 9 : 0}>{t}</Tab>
              ))}
            </TabStrip>
            <JobTrackerForm />
            <TabStrip $ml={3} $pad={3} $bg="#cfcfcf">
              <Tab $on $w={104}>Demand Summary</Tab>
              {demandTabs.map(([t, w], i) => (
                <Tab key={t} $w={w} $ml={i === 0 ? 9 : 0}>{t}</Tab>
              ))}
            </TabStrip>
            <Section $h={439} $mt={3} $pl={11}>
              <GridTable
                title="Demand Summary"
                titleW={850}
                cols={demandCols}
                row={['', '1056-86-WB', '', 'Whse DEPCK', '4.00000', '4.00000', '', '']}
                merge
                noRight
                scroll={
                  <GridScroll $bg="#e8e8e8">
                    <GridScrollPart $w={4} $bg="#f6f6f6" />
                    <GridScrollPart $w={207} $bg="#bdbdbd" $justify="flex-start" $pl={4}>
                      <ScrollTri $left $c="#000" />
                    </GridScrollPart>
                  </GridScroll>
                }
              />
            </Section>
            <HScroll $mt={13}>
              <ArrowSlot $w={16}><ChevronLeft size={13} strokeWidth={3} /></ArrowSlot>
              <HThumb $ml={1} $w={434} />
              <ArrowSlot $w={16} $ml={162}><ChevronRight size={13} strokeWidth={3} /></ArrowSlot>
            </HScroll>
          </Main>
        </Body>
        <StatusBar $h={26} $left={2}>
          Ready
          <SizeGrip width="10" height="10" viewBox="0 0 10 10" stroke="#888">
            <path d="M1 10L10 1M5 10l5-5M8 10l2-2" />
          </SizeGrip>
        </StatusBar>
      </Window>

      <Window>
        <TitleBar $left={12} $active>
          <AppIcon />
          Job Scheduling Board
          <WinButtons $active $pr={15}>
            <Minus size={14} strokeWidth={1.3} />
            <Square size={12} strokeWidth={1.3} />
            <X size={14} strokeWidth={1.3} />
          </WinButtons>
        </TitleBar>
        <MenuBar $left={17}>
          <MenuItem $w={29}>File</MenuItem>
          <MenuItem $w={31}>Edit</MenuItem>
          <MenuItem $w={40}>Tools</MenuItem>
          <MenuItem $w={50}>Actions</MenuItem>
          <MenuItem $w={30}>Help</MenuItem>
        </MenuBar>
        <ToolBar $left={5}>
          <Grip $ml={0} $mr={5} />
          <ToolBtn><File size={17} /></ToolBtn>
          <ToolBtn><X size={18} strokeWidth={4} /></ToolBtn>
          <ToolBtn><Trash2 size={17} color="#aaa" /></ToolBtn>
          <ToolBtn><RefreshCw size={17} strokeWidth={3} /></ToolBtn>
          <ToolBtn><Paintbrush size={17} /></ToolBtn>
          <ToolBtn><FolderClosed size={17} fill="#eee" /></ToolBtn>
          <ToolBtn><ClipboardCheck size={17} /></ToolBtn>
          <ToolBtn><ClockFlag kind="bar" /></ToolBtn>
          <ToolBtn><ClockFlag kind="check" /></ToolBtn>
          <ToolBtn><ClockFlag kind="bar" /></ToolBtn>
          <ToolBtn><ClockFlag kind="arrow" /></ToolBtn>
          <ToolBtn><ClockFlag kind="doc" /></ToolBtn>
          <ToolBtn><Binoculars size={17} color="#888" /></ToolBtn>
          <Sep />
          <ToolBtn $w={24}><ZoomIn size={18} strokeWidth={3} /></ToolBtn>
          <ToolBtn><ZoomOut size={18} strokeWidth={3} /></ToolBtn>
          <Sep />
          <ToolBtn $w={25}><Printer size={18} fill="#eee" color="#eee" /></ToolBtn>
          <Sep />
          <ToolBtn $w={25}><Scissors size={18} /></ToolBtn>
          <ToolBtn><Copy size={17} /></ToolBtn>
          <ToolBtn><ClipboardList size={17} /></ToolBtn>
          <Grip />
          <ToolBtn><CircleGo dir="left" color="#bbb" /></ToolBtn>
          <ToolBtn><CircleGo color="#bbb" /></ToolBtn>
          <ToolBtn><CircleGo dir="home" color="#bbb" /></ToolBtn>
          <Grip />
        </ToolBar>
        <ToolBar $left={5} $h={27}>
          <Grip $ml={0} $mr={5} />
          <ToolBtn><Binoculars size={18} fill="#eee" /></ToolBtn>
          <BarLabel $ml={28}>Goto</BarLabel>
          <GotoBox $w={90} $h={19} $ml={1}>
            4/26/2023
            <GotoArrow><WhiteTri $c="#fff" /></GotoArrow>
          </GotoBox>
          <BarLabel $ml={28}>Sort By</BarLabel>
          <GotoBox $w={158} $h={23} $ml={3}>
            Start Date
            <GotoArrow><WhiteTri $c="#fff" /></GotoArrow>
          </GotoBox>
        </ToolBar>
        <Body $inset>
          <Dock $w={216}>
            <DockHeader $left={2}>Field Help <Pin size={12} fill="#fff" /></DockHeader>
            <HelpBar>
              <span>Open Help Browser</span>
              <span>Close</span>
            </HelpBar>
            <HelpPane $col>
              <HelpBody $top={7}>
                <HelpRowList rows={resourceHelp} lw={114} w={88} gap={4.75} />
                <Row $mt={4.75}>
                  <Field l="Like:" lw={114} pad={10} />
                  <Box $w={88}>
                    Resource.Re
                    <Check $bg="#fff" $ml={1}>
                      <svg width="9" height="8" viewBox="0 0 9 8" fill="#5a1a5a">
                        <path d="M0 0l4 4-4 4zM5 0l4 4-4 4z" />
                      </svg>
                    </Check>
                  </Box>
                </Row>
                <CheckGrid col={93} left={7} mt={7} items={resourceChecks} />
                <DescLabel $left={5} $mt={1} $mb={4}>Description:</DescLabel>
                <DescBox $w={197} $h={83} $left={2}>
                  <DescText />
                  <DescScroll $c="#bbb">
                    <ChevronUp size={11} strokeWidth={3} />
                    <ChevronDown size={11} strokeWidth={3} />
                  </DescScroll>
                </DescBox>
              </HelpBody>
              <HScroll>
                <ArrowSlot $w={17}><ChevronLeft size={13} strokeWidth={3} /></ArrowSlot>
                <HThumb $ml={0} $w={178} />
                <ArrowSlot $w={19}><ChevronRight size={13} strokeWidth={3} /></ArrowSlot>
              </HScroll>
            </HelpPane>
            <HSash $h={7}><HSashDots /></HSash>
            <Footer h={81} />
          </Dock>
          <Sash $w={4} />
          <Main>
            <DockHeader $left={2}>Job Scheduling Board <Pin size={12} fill="#fff" /></DockHeader>
            <TabStrip $pad={9}>
              <Tab $w={61}>Selection</Tab>
              <Tab $w={55}>Schedule</Tab>
              <Tab $on $w={40}>Detail</Tab>
            </TabStrip>
            <TabStrip $pad={4} $h={25} $mt={1}>
              <Tab $on $w={104}>Scheduling Details</Tab>
              <Tab $w={130} $ml={8}>Scheduling Comments</Tab>
            </TabStrip>
            <SchedulingForm />
            <Section $h={342} $gap={17} $mt={7} $pl={1}>
              <GridTable
                title="Material Constraints"
                titleW={312}
                cols={materialCols}
                w={368}
                scroll={
                  <GridScroll $bg={dark}>
                    <GridScrollPart $w={75} $bg={dark} />
                    <GridScrollPart $w={275} $bg="#bdbdbd" />
                    <GridScrollPart $bg={dark}>
                      <ScrollTri $c="#fff" />
                    </GridScrollPart>
                  </GridScroll>
                }
              />
              <GridTable
                title="Resource"
                titleW={424}
                cols={resourceCols}
                row={['', 'INJ07', 'INJ 07', '', '5']}
                merge
                noRight
                scroll={
                  <GridScroll $bg={dark}>
                    <GridScrollPart $w={5} $bg="#fff" />
                    <GridScrollPart $w={16} $bg={dark}>
                      <ScrollTri $left $c="#fff" />
                    </GridScrollPart>
                  </GridScroll>
                }
              />
            </Section>
            <HScroll $mt={11}>
              <ArrowSlot $w={15}><ChevronLeft size={13} strokeWidth={3} /></ArrowSlot>
              <HThumb $ml={59} $w={571} />
              <ArrowSlot $w={15} $ml={61}><ChevronRight size={13} strokeWidth={3} /></ArrowSlot>
            </HScroll>
          </Main>
        </Body>
        <StatusBar $h={21} $left={5}>
          Ready
          <SizeGrip width="10" height="10" viewBox="0 0 10 10" stroke="#888">
            <path d="M1 10L10 1M5 10l5-5M8 10l2-2" />
          </SizeGrip>
        </StatusBar>
      </Window>

      <Overlay width="1900" height="1033" viewBox="0 0 1900 1033" fill="none" stroke="#e81c1c" strokeWidth="5.5" strokeLinecap="round" strokeLinejoin="round">
        <path d="M475 121C500 120 520 128 534 145C538 155 530 160 514 161C490 162 465 162 452 155C444 148 449 134 475 121Z" />
        <path d="M536 141C560 150 600 157 657 164C700 167 740 167 780 168C830 171 880 179 950 185C1000 191 1060 197 1134 200C1160 205 1180 205 1197 200" />
        <path d="M1199 205C1205 192 1225 183 1250 184C1280 186 1305 198 1319 212C1310 219 1270 218 1228 219C1212 220 1200 214 1199 205Z" />
        <path d="M379 351C392 338 420 336 490 338C510 342 518 350 513 366C490 373 430 372 400 368C388 365 380 360 379 351Z" />
        <path d="M514 363C540 385 600 420 637 430C680 445 740 462 800 477C850 490 900 505 950 520C1000 535 1060 545 1100 558C1125 565 1150 572 1170 580C1210 600 1250 605 1291 617C1330 628 1360 632 1389 640C1420 650 1440 655 1459 663C1470 672 1475 674 1482 675C1505 678 1530 682 1556 691" />
        <path d="M1635 628C1680 626 1740 625 1775 628C1810 632 1840 632 1850 640C1862 652 1868 665 1864 680C1858 697 1840 708 1812 717C1790 728 1760 733 1729 735C1700 737 1680 737 1659 735C1630 730 1600 727 1589 720C1568 712 1555 700 1556 685C1556 670 1570 650 1603 637C1615 632 1625 630 1635 628Z" />
      </Overlay>
    </Screen>
  );
}
